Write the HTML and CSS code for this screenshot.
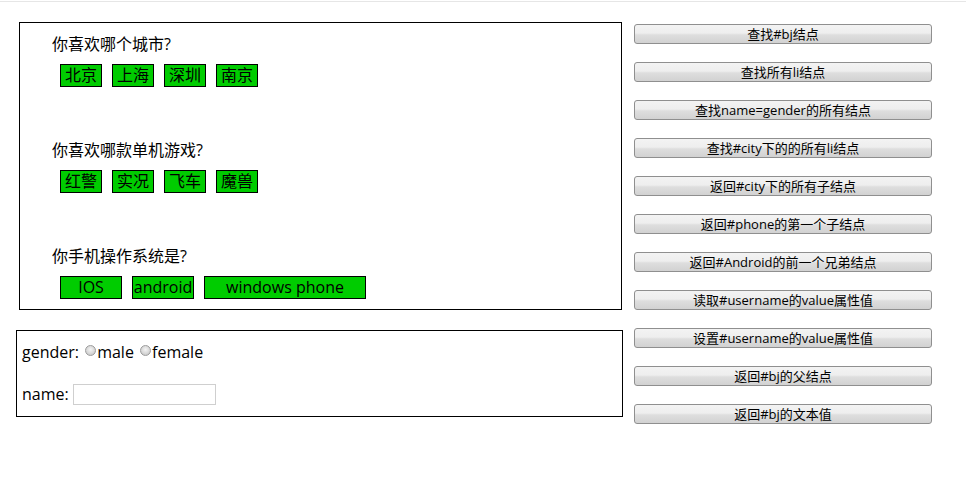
FILE: index.html
```html
<!DOCTYPE html>
<html lang="zh-CN">
<head>
<meta charset="utf-8">
<title>DOM 练习</title>
<link rel="stylesheet" href="styles.css">
</head>
<body>
<div class="topline"></div>
<div class="page">
  <div class="left">
    <div class="total">
      <div class="section">
        <p class="question">你喜欢哪个城市?</p>
        <ul class="items" id="city">
          <li id="bj">北京</li>
          <li>上海</li>
          <li>深圳</li>
          <li>南京</li>
        </ul>
      </div>
      <div class="section">
        <p class="question">你喜欢哪款单机游戏?</p>
        <ul class="items" id="game">
          <li>红警</li>
          <li>实况</li>
          <li>飞车</li>
          <li>魔兽</li>
        </ul>
      </div>
      <div class="section">
        <p class="question">你手机操作系统是?</p>
        <ul class="items" id="phone">
          <li class="w60">IOS</li>
          <li class="w60" id="android">android</li>
          <li class="w160">windows phone</li>
        </ul>
      </div>
    </div>
    <div class="form-box">
      <div class="form-line">gender: <input class="radio" type="radio" name="gender" value="male">male <input class="radio" type="radio" name="gender" value="female">female</div>
      <div class="form-line name-line">name:&nbsp;<input class="text" type="text" name="name" id="username"></div>
    </div>
  </div>
  <div class="buttons">
    <button class="btn">查找#bj结点</button>
    <button class="btn">查找所有li结点</button>
    <button class="btn">查找name=gender的所有结点</button>
    <button class="btn">查找#city下的的所有li结点</button>
    <button class="btn">返回#city下的所有子结点</button>
    <button class="btn">返回#phone的第一个子结点</button>
    <button class="btn">返回#Android的前一个兄弟结点</button>
    <button class="btn">读取#username的value属性值</button>
    <button class="btn">设置#username的value属性值</button>
    <button class="btn">返回#bj的父结点</button>
    <button class="btn">返回#bj的文本值</button>
  </div>
</div>
</body>
</html>
```
FILE: styles.css
```css
html, body {
  margin: 0;
  padding: 0;
  background: #ffffff;
}

body {
  font-family: "Open Sans", "Noto Sans CJK SC", sans-serif;
  font-size: 16px;
  color: #000;
}

.topline {
  height: 1px;
  margin-top: 1px;
  background: #e6e6e6;
}

.page {
  display: flex;
  align-items: flex-start;
  padding: 20px 0 0 16px;
  gap: 11px;
}

.left {
  width: 607px;
  display: flex;
  flex-direction: column;
  gap: 20px;
}

.total {
  box-sizing: border-box;
  width: 603px;
  margin-left: 3px;
  border: 1px solid #000;
  padding: 11px 0 10px 32px;
  display: flex;
  flex-direction: column;
  gap: 53px;
}

.section {
  display: flex;
  flex-direction: column;
  gap: 9px;
}

.question {
  margin: 0;
  line-height: 21px;
  height: 21px;
}

.items {
  list-style: none;
  margin: 0;
  padding: 0 0 0 8px;
  display: flex;
  gap: 10px;
}

.items li {
  border: 1px solid #000;
  background: #00cc00;
  padding: 0 4px;
  line-height: 21px;
  height: 21px;
  text-align: center;
  white-space: nowrap;
}

.items li.w60 {
  width: 60px;
  padding: 0;
}

.items li.w160 {
  width: 160px;
  padding: 0;
}

.form-box {
  box-sizing: border-box;
  width: 607px;
  height: 87px;
  border: 1px solid #000;
  padding: 11px 5px 10px 5px;
  display: flex;
  flex-direction: column;
  gap: 21px;
}

.form-line {
  line-height: 21px;
  height: 21px;
  white-space: nowrap;
}

.name-line {
  display: flex;
  align-items: center;
}

.radio {
  -webkit-appearance: none;
  appearance: none;
  box-sizing: border-box;
  width: 11px;
  height: 11px;
  margin: 0 1px 0 2px;
  border: 1px solid #9c9c9c;
  border-radius: 50%;
  background: radial-gradient(circle at 50% 40%, #f4f4f4 0%, #d8d8d8 55%, #bdbdbd 100%);
  vertical-align: 2px;
}

.text {
  box-sizing: border-box;
  width: 143px;
  height: 21px;
  margin: 0;
  border: 1px solid #cfcfcf;
  padding: 0 2px;
  font: inherit;
  font-size: 13px;
  background: #fff;
}

.buttons {
  margin-top: 2px;
  width: 298px;
  display: flex;
  flex-direction: column;
  gap: 18px;
}

.btn {
  box-sizing: border-box;
  width: 298px;
  height: 20px;
  margin: 0;
  padding: 0;
  border: 1px solid #8f8f8f;
  border-radius: 3px;
  background: linear-gradient(#f3f3f3 0%, #eeeeee 45%, #dedede 55%, #d2d2d2 100%);
  font-family: "Open Sans", "Noto Sans CJK SC", sans-serif;
  font-size: 13px;
  line-height: 18px;
  color: #000;
  text-align: center;
  white-space: nowrap;
}
```
